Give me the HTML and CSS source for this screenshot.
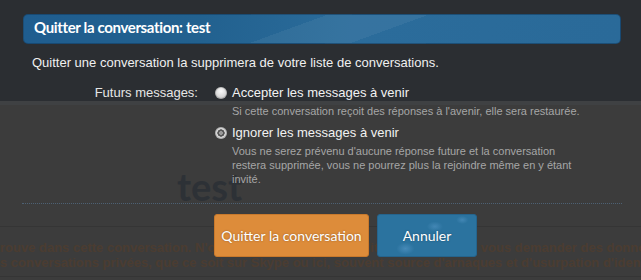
FILE: index.html
```html
<!DOCTYPE html>
<html lang="fr">
<head>
<meta charset="utf-8">
<title>Quitter la conversation</title>
<link rel="stylesheet" href="styles.css">
</head>
<body>
<div class="page">
  <div class="page-top"></div>
  <div class="page-band"></div>
  <div class="page-head"><h1 class="page-title">test</h1></div>
  <div class="page-notice">
    <p>rouve dans cette conversation. N'oubliez pas qu'il est interdit à quiconque de vous demander des données personnelles</p>
    <p>s conversations privées, que ce soit sur Skype ou ici, souvent source d'arnaques et d'usurpation d'identité</p>
  </div>
</div>
<div class="overlay">
  <div class="dialog">
    <h2 class="dialog-title">Quitter la conversation: test</h2>
    <p class="dialog-intro">Quitter une conversation la supprimera de votre liste de conversations.</p>
    <div class="form-row">
      <div class="form-label">Futurs messages:</div>
      <div class="form-controls">
        <label class="option"><span class="radio"></span><span>Accepter les messages à venir</span></label>
        <p class="hint">Si cette conversation reçoit des réponses à l'avenir, elle sera restaurée.</p>
        <label class="option option-2"><span class="radio radio-checked"></span><span>Ignorer les messages à venir</span></label>
        <p class="hint">Vous ne serez prévenu d'aucune réponse future et la conversation restera supprimée, vous ne pourrez plus la rejoindre même en y étant invité.</p>
      </div>
    </div>
    <div class="form-row form-buttons">
      <div class="form-label"></div>
      <div class="button-group">
        <span class="btn btn-primary">Quitter la conversation</span>
        <span class="btn btn-cancel">Annuler</span>
      </div>
    </div>
  </div>
</div>
</body>
</html>
```
FILE: styles.css
```css
* { box-sizing: border-box; }
html, body {
  margin: 0;
  padding: 0;
}
body {
  width: 641px;
  height: 280px;
  overflow: hidden;
  position: relative;
  background: #3c3c3c;
  font-family: "Liberation Sans", Arial, sans-serif;
}

/* background page */
.page-top {
  height: 101px;
  background: #2b2e32;
}
.page-band {
  height: 4px;
  background: #3f4143;
}
.page-head {
  margin: 0 19px 0 22px;
  padding-top: 64px;
  border-bottom: 1px dotted #4d6174;
}
.page-title {
  margin: 0;
  padding-left: 155px;
  font-family: Lato, sans-serif;
  font-weight: 700;
  font-size: 38px;
  line-height: 34px;
  color: #2d3136;
}
.page-notice {
  margin-top: 22px;
  padding: 13px 0 6px;
  border-top: 1px solid #353535;
  border-bottom: 1px solid #353535;
  white-space: nowrap;
}
.page-notice p {
  margin: 0;
  font-weight: 700;
  font-size: 13px;
  line-height: 15px;
  color: #4b3c31;
}

/* dialog */
.overlay {
  position: absolute;
  top: 0;
  left: 0;
  width: 641px;
  height: 280px;
}
.dialog-title {
  margin: 14px 20px 0 23px;
  height: 30px;
  padding: 0 10px 4px;
  border-radius: 5px;
  border: 1px solid rgba(20, 60, 95, 0.6);
  background:
    linear-gradient(160deg, rgba(255,255,255,0) 0 45%, rgba(255,255,255,0.05) 45% 60%, rgba(255,255,255,0) 60%),
    linear-gradient(100deg, #1f5d8f 0%, #22618f 30%, #2b6c9b 55%, #2a6a99 100%);
  font-family: Lato, sans-serif;
  font-weight: 700;
  font-size: 15px;
  letter-spacing: -0.35px;
  line-height: 25px;
  color: #ffffff;
}
.dialog-intro {
  margin: 11px 0 0;
  padding-left: 32px;
  font-size: 13px;
  line-height: 16px;
  color: #f0f0f0;
}
.form-row {
  display: grid;
  grid-template-columns: 198px 1fr;
  column-gap: 17px;
  margin-top: 14px;
}
.form-label {
  text-align: right;
  font-size: 13px;
  line-height: 16px;
  color: #e6e6e6;
}
.option {
  display: flex;
  align-items: flex-start;
  font-size: 13px;
  line-height: 16px;
  color: #f2f2f2;
}
.option-2 { margin-top: 7px; }
.radio {
  flex: none;
  width: 12px;
  height: 12px;
  margin: 2px 5px 0 0;
  border-radius: 50%;
  background: radial-gradient(circle at 50% 35%, #fafafa 0, #d9d9d9 55%, #a9a9a9 100%);
  box-shadow: inset 0 0 0 1px rgba(0,0,0,0.15);
}
.radio-checked {
  background: radial-gradient(circle, #9a9a9a 0 1.6px, #555 2.2px 3.4px, #dcdcdc 3.9px, #b5b5b5 100%);
}
.hint {
  margin: 3px 0 0 17px;
  max-width: 350px;
  font-size: 11px;
  line-height: 14px;
  color: #a6a6a6;
}
.form-buttons { margin-top: 28px; }
.button-group {
  display: flex;
  gap: 8px;
  margin-left: -1px;
}
.btn {
  display: flex;
  align-items: center;
  justify-content: center;
  height: 43px;
  border-radius: 3px;
  font-family: Lato, sans-serif;
  font-size: 14px;
  color: #ffffff;
  text-shadow: 0 0 2px rgba(0,0,0,0.35);
}
.btn-primary {
  width: 155px;
  background: #dd8c3a;
  border: 1px solid #c8792c;
}
.btn-cancel {
  width: 100px;
  background:
    radial-gradient(ellipse 9px 6px at 28% 82%, rgba(120,180,230,0.35), transparent),
    radial-gradient(ellipse 8px 5px at 58% 28%, rgba(120,180,230,0.3), transparent),
    radial-gradient(ellipse 6px 4px at 86% 12%, rgba(120,180,230,0.3), transparent),
    #2b739f;
  border: 1px solid #25648d;
}
```
